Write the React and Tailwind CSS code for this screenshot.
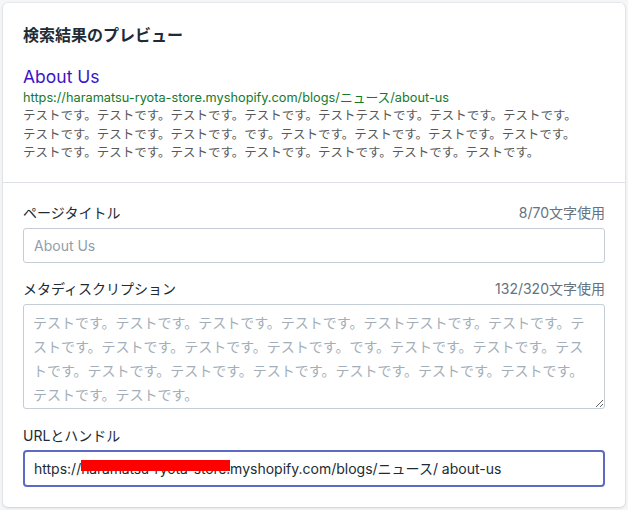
import React from 'react';

const desc = [
  'テストです。テストです。テストです。テストです。テストテストです。テストです。テストです。',
  'テストです。テストです。テストです。です。テストです。テストです。テストです。テストです。',
  'テストです。テストです。テストです。テストです。テストです。テストです。テストです。',
];

const font = { fontFamily: 'Inter, "Noto Sans CJK JP", sans-serif' };

export default function App() {
  return (
    <div className="min-h-[510px] bg-[#f4f6f8] p-[3px]" style={font}>
      <div className="rounded-[5px] bg-white shadow-[0_0_0_1px_rgba(63,63,68,0.05),0_1px_3px_0_rgba(63,63,68,0.15)]">
        {/* Preview */}
        <div className="px-5 pt-5 pb-[19px] border-b border-[#dfe3e8]">
          <h2 className="text-[16px] leading-6 font-semibold text-[#212b36]">検索結果のプレビュー</h2>
          <div className="mt-[18px] text-[17.5px] leading-6 text-[#3a15c6]">About Us</div>
          <div className="text-[12.75px] leading-[18px] text-[#147a2b]">
            https://haramatsu-ryota-store.myshopify.com/blogs/ニュース/about-us
          </div>
          <p className="text-[12.5px] leading-[18.5px] text-[#595959] whitespace-nowrap">
            {desc.map((l, i) => (
              <span key={i} className="block">{l}</span>
            ))}
          </p>
        </div>

        {/* Form */}
        <div className="px-5 pt-5 pb-5">
          <div className="flex items-center justify-between text-[14px] leading-5">
            <label className="text-[#212b36]">ページタイトル</label>
            <span className="text-[#637381]">8/70文字使用</span>
          </div>
          <input
            readOnly
            placeholder="About Us"
            className="mt-[5px] block w-full h-[35px] rounded-[3px] border border-[#c4cdd5] px-[10px] text-[14px] text-[#212b36] placeholder:text-[#919eab] outline-none"
          />

          <div className="mt-4 flex items-center justify-between text-[14px] leading-5">
            <label className="text-[#212b36]">メタディスクリプション</label>
            <span className="text-[#637381]">132/320文字使用</span>
          </div>
          <textarea
            readOnly
            placeholder={desc.join('')}
            className="mt-[5px] block w-full h-[105px] rounded-[3px] border border-[#c4cdd5] pl-[9px] pr-[8px] pt-[6px] text-[14px] leading-6 text-[#212b36] placeholder:text-[#a3aeb8] outline-none"
          />

          <div className="mt-[17px] text-[14px] leading-5 text-[#212b36]">URLとハンドル</div>
          <div className="mt-[4px] flex items-center h-[37px] rounded-[4px] border-2 border-[#5c6ac4] px-[9px] text-[14px] text-[#212b36] whitespace-nowrap">
            <span>https://</span>
            <span className="relative">
              <span className="text-[#212b36] tracking-[-0.2px]">haramatsu-ryota-store.</span>
              <span className="absolute left-0 right-0 top-[2px] h-[11px] bg-[#ff0000]" />
            </span>
            <span>myshopify.com/blogs/ニュース/ about-us</span>
          </div>
        </div>
      </div>
    </div>
  );
}
